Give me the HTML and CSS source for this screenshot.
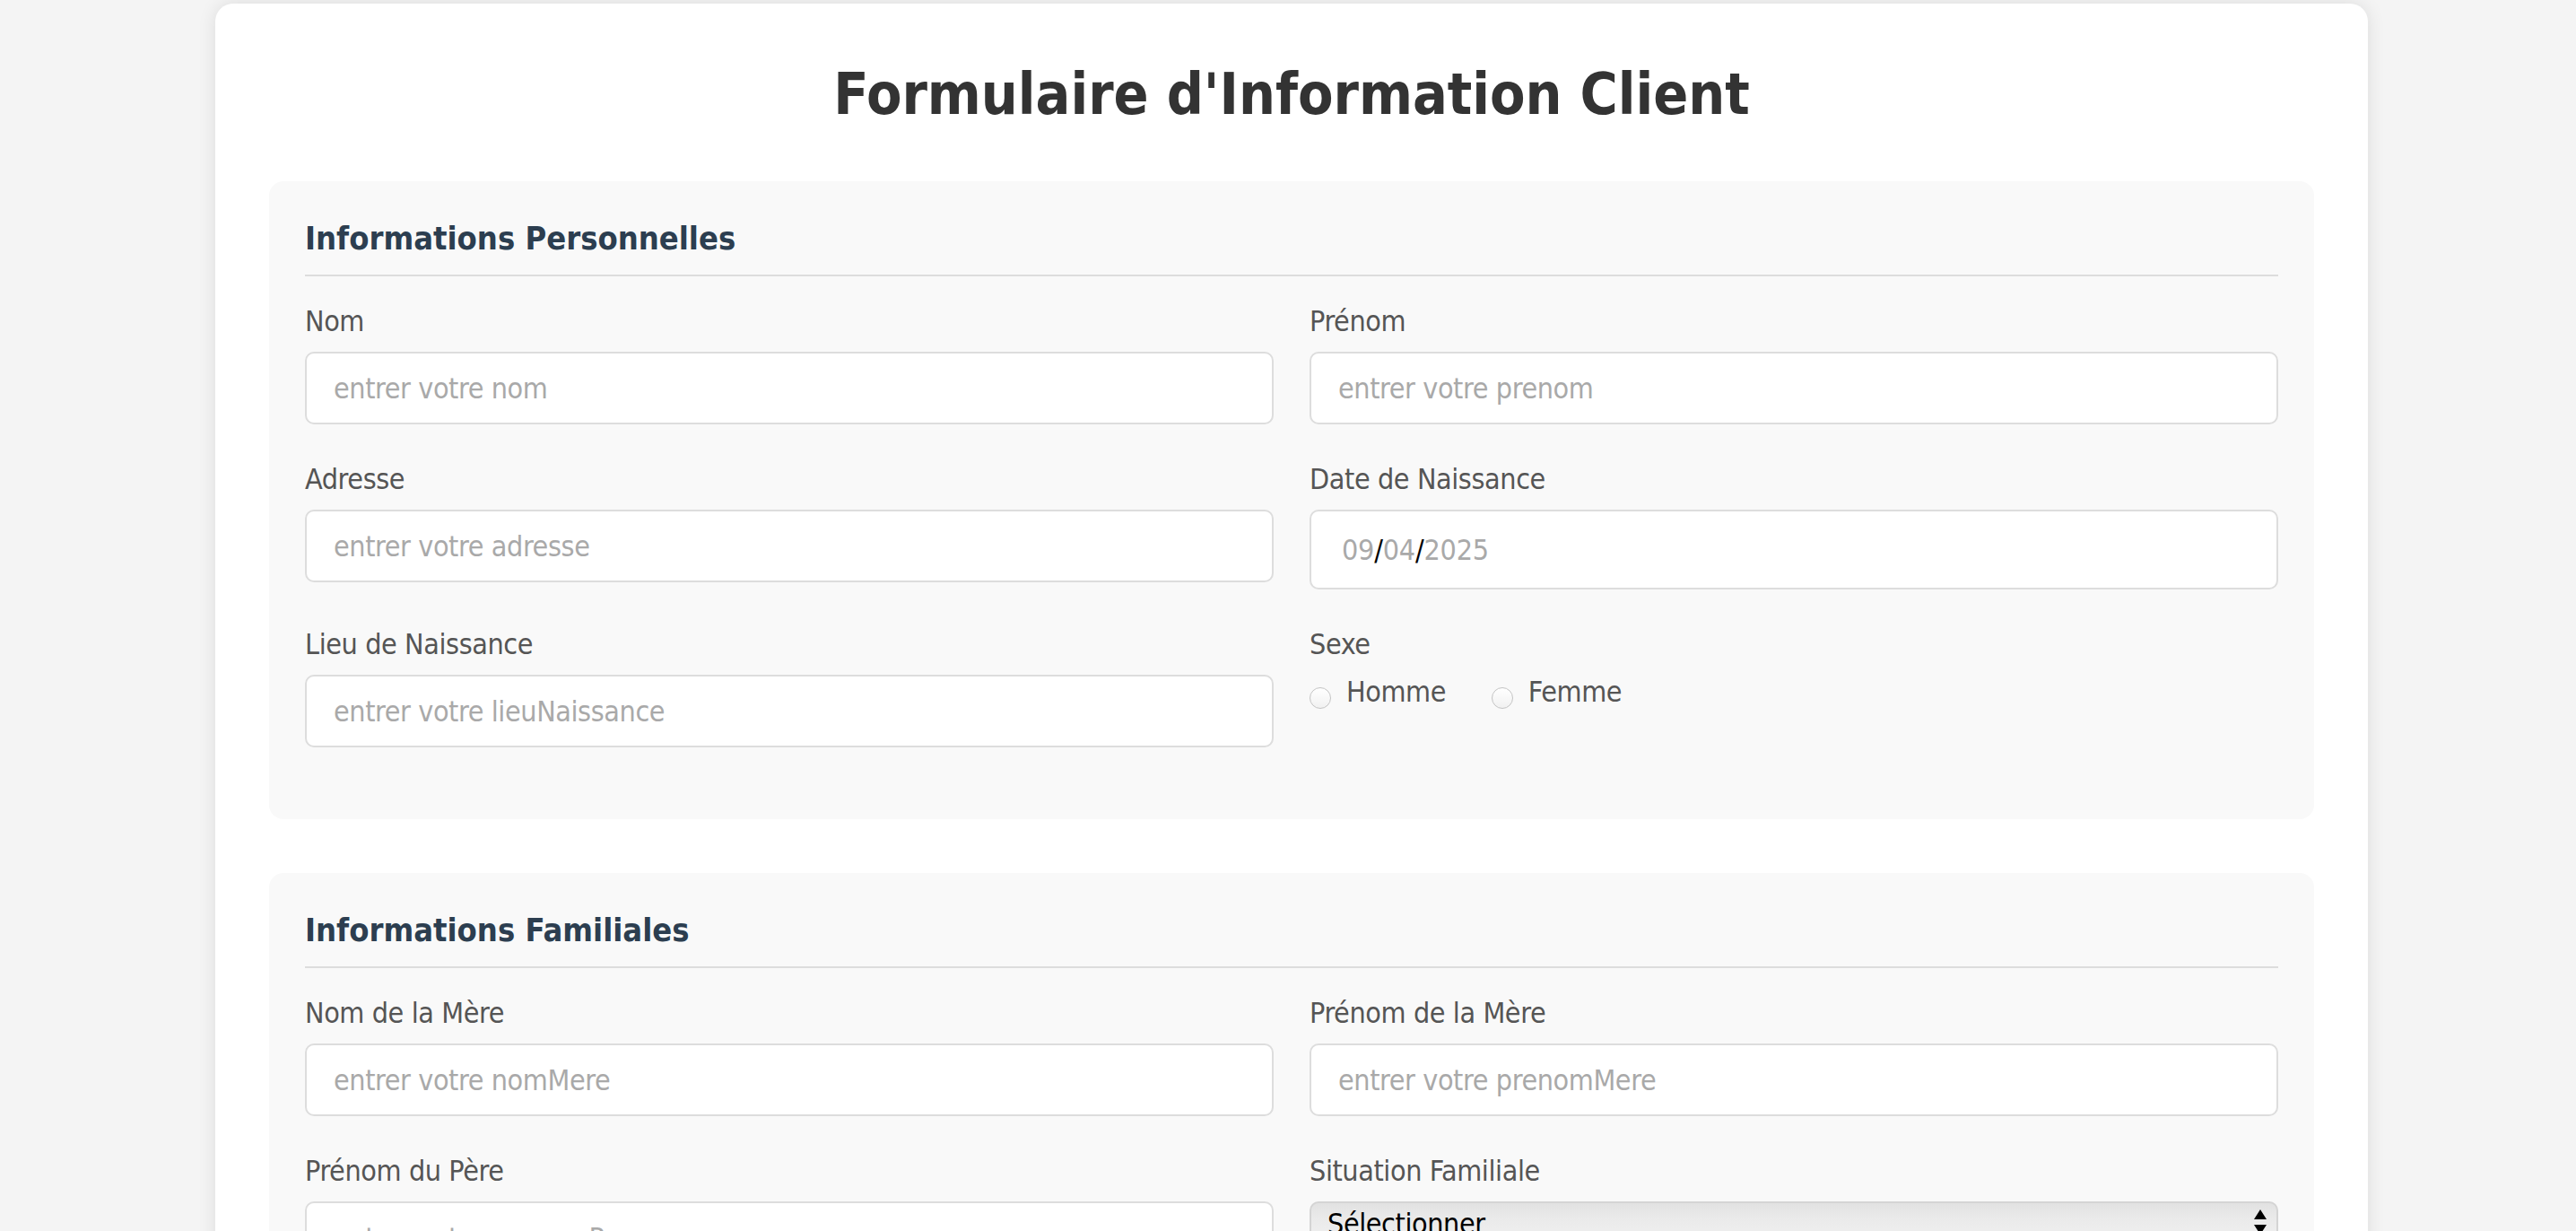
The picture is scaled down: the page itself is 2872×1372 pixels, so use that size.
FILE: index.html
```html
<!DOCTYPE html>
<html lang="fr">
<head>
<meta charset="utf-8">
<title>Formulaire d'Information Client</title>
<link rel="stylesheet" href="styles.css">
</head>
<body>
<div class="container">
  <h1 class="title">Formulaire d'Information Client</h1>
  <form class="client-form">
    <section class="section">
      <h3 class="section-title">Informations Personnelles</h3>
      <div class="grid">
        <div class="field">
          <label class="field-label" for="nom">Nom</label>
          <input class="text-input" id="nom" type="text" placeholder="entrer votre nom">
        </div>
        <div class="field">
          <label class="field-label" for="prenom">Prénom</label>
          <input class="text-input" id="prenom" type="text" placeholder="entrer votre prenom">
        </div>
        <div class="field">
          <label class="field-label" for="adresse">Adresse</label>
          <input class="text-input" id="adresse" type="text" placeholder="entrer votre adresse">
        </div>
        <div class="field">
          <label class="field-label">Date de Naissance</label>
          <div class="date-input"><span class="seg">09</span><span class="sep">/</span><span class="seg">04</span><span class="sep">/</span><span class="seg">2025</span></div>
        </div>
        <div class="field">
          <label class="field-label" for="lieu">Lieu de Naissance</label>
          <input class="text-input" id="lieu" type="text" placeholder="entrer votre lieuNaissance">
        </div>
        <div class="field">
          <label class="field-label">Sexe</label>
          <div class="radio-row">
            <label class="radio-option"><input class="radio" type="radio" name="sexe">Homme</label>
            <label class="radio-option"><input class="radio" type="radio" name="sexe">Femme</label>
          </div>
        </div>
      </div>
    </section>

    <section class="section">
      <h3 class="section-title">Informations Familiales</h3>
      <div class="grid">
        <div class="field">
          <label class="field-label" for="nomMere">Nom de la Mère</label>
          <input class="text-input" id="nomMere" type="text" placeholder="entrer votre nomMere">
        </div>
        <div class="field">
          <label class="field-label" for="prenomMere">Prénom de la Mère</label>
          <input class="text-input" id="prenomMere" type="text" placeholder="entrer votre prenomMere">
        </div>
        <div class="field">
          <label class="field-label" for="prenomPere">Prénom du Père</label>
          <input class="text-input" id="prenomPere" type="text" placeholder="entrer votre prenomPere">
        </div>
        <div class="field">
          <label class="field-label" for="situation">Situation Familiale</label>
          <div class="select-wrap">
            <select class="select" id="situation">
              <option>Sélectionner</option>
              <option>Célibataire</option>
              <option>Marié(e)</option>
              <option>Divorcé(e)</option>
              <option>Veuf(ve)</option>
            </select>
            <svg class="select-arrows" width="16" height="28" viewBox="0 0 16 28"><path d="M8 0 L15 11 L1 11 Z M1 17 L15 17 L8 28 Z" fill="#000"/></svg>
          </div>
        </div>
      </div>
    </section>
  </form>
</div>
</body>
</html>
```

FILE: styles.css
```css
* {
  box-sizing: border-box;
}

html, body {
  margin: 0;
}

body {
  background: #f4f4f4;
  padding: 4px 0 0 8px;
  font-family: "DejaVu Sans Condensed", "DejaVu Sans", sans-serif;
  font-stretch: condensed;
  color: #333;
}

.container {
  width: 2400px;
  margin: 0 auto;
  background: #fff;
  padding: 60px;
  border-radius: 20px;
  box-shadow: 0 0 20px rgba(0, 0, 0, 0.1);
}

.title {
  margin: 0 0 55px;
  font-size: 64px;
  line-height: 83px;
  font-weight: bold;
  text-align: center;
  color: #333;
}

.section {
  background: #f9f9f9;
  border-radius: 16px;
  padding: 40px 40px 38px;
  margin-bottom: 60px;
}

.section-title {
  margin: 0 0 31px;
  padding-bottom: 17px;
  border-bottom: 2px solid #ddd;
  font-size: 36px;
  line-height: 47px;
  font-weight: bold;
  color: #2c3e50;
}

.grid {
  display: grid;
  grid-template-columns: 1fr 1fr;
  column-gap: 40px;
}

.field {
  margin-bottom: 42px;
}

.field-label {
  display: block;
  margin-bottom: 15px;
  font-size: 32px;
  line-height: 38px;
  letter-spacing: -0.4px;
  color: #555;
}

.text-input {
  display: block;
  width: 100%;
  height: 81px;
  padding: 0 30px;
  border: 2px solid #ddd;
  border-radius: 10px;
  background: #fff;
  font-family: inherit;
  font-stretch: condensed;
  font-size: 32px;
  letter-spacing: -0.4px;
  color: #333;
  outline: none;
}

.text-input::placeholder {
  color: #a9a9a9;
}

.date-input {
  display: flex;
  align-items: center;
  height: 89px;
  padding: 0 34px;
  border: 2px solid #ddd;
  border-radius: 10px;
  background: #fff;
  font-size: 32px;
  letter-spacing: -0.2px;
}

.date-input .seg {
  color: #a9a9a9;
}

.date-input .sep {
  color: #000;
}

.radio-row {
  font-size: 32px;
  line-height: 38px;
  letter-spacing: -0.4px;
  color: #555;
}

.radio-option {
  display: inline-block;
  margin-right: 42px;
}

.radio {
  appearance: none;
  -webkit-appearance: none;
  width: 24px;
  height: 24px;
  margin: 0 17px 0 0;
  border: 1px solid #c4c4c4;
  border-radius: 50%;
  background: linear-gradient(#ffffff, #f1f1f1);
  vertical-align: -8px;
}

.select-wrap {
  position: relative;
}

.select {
  appearance: none;
  -webkit-appearance: none;
  display: block;
  width: 100%;
  height: 51px;
  padding: 0 60px 0 18px;
  border: 2px solid #d4d4d4;
  border-radius: 10px;
  background: linear-gradient(#e2e2e2 0%, #eaeaea 35%, #f1f1f1 100%);
  font-family: inherit;
  font-stretch: condensed;
  font-size: 32px;
  line-height: 47px;
  letter-spacing: -0.4px;
  color: #000;
}

.select-arrows {
  position: absolute;
  right: 12px;
  top: 9px;
}
```
